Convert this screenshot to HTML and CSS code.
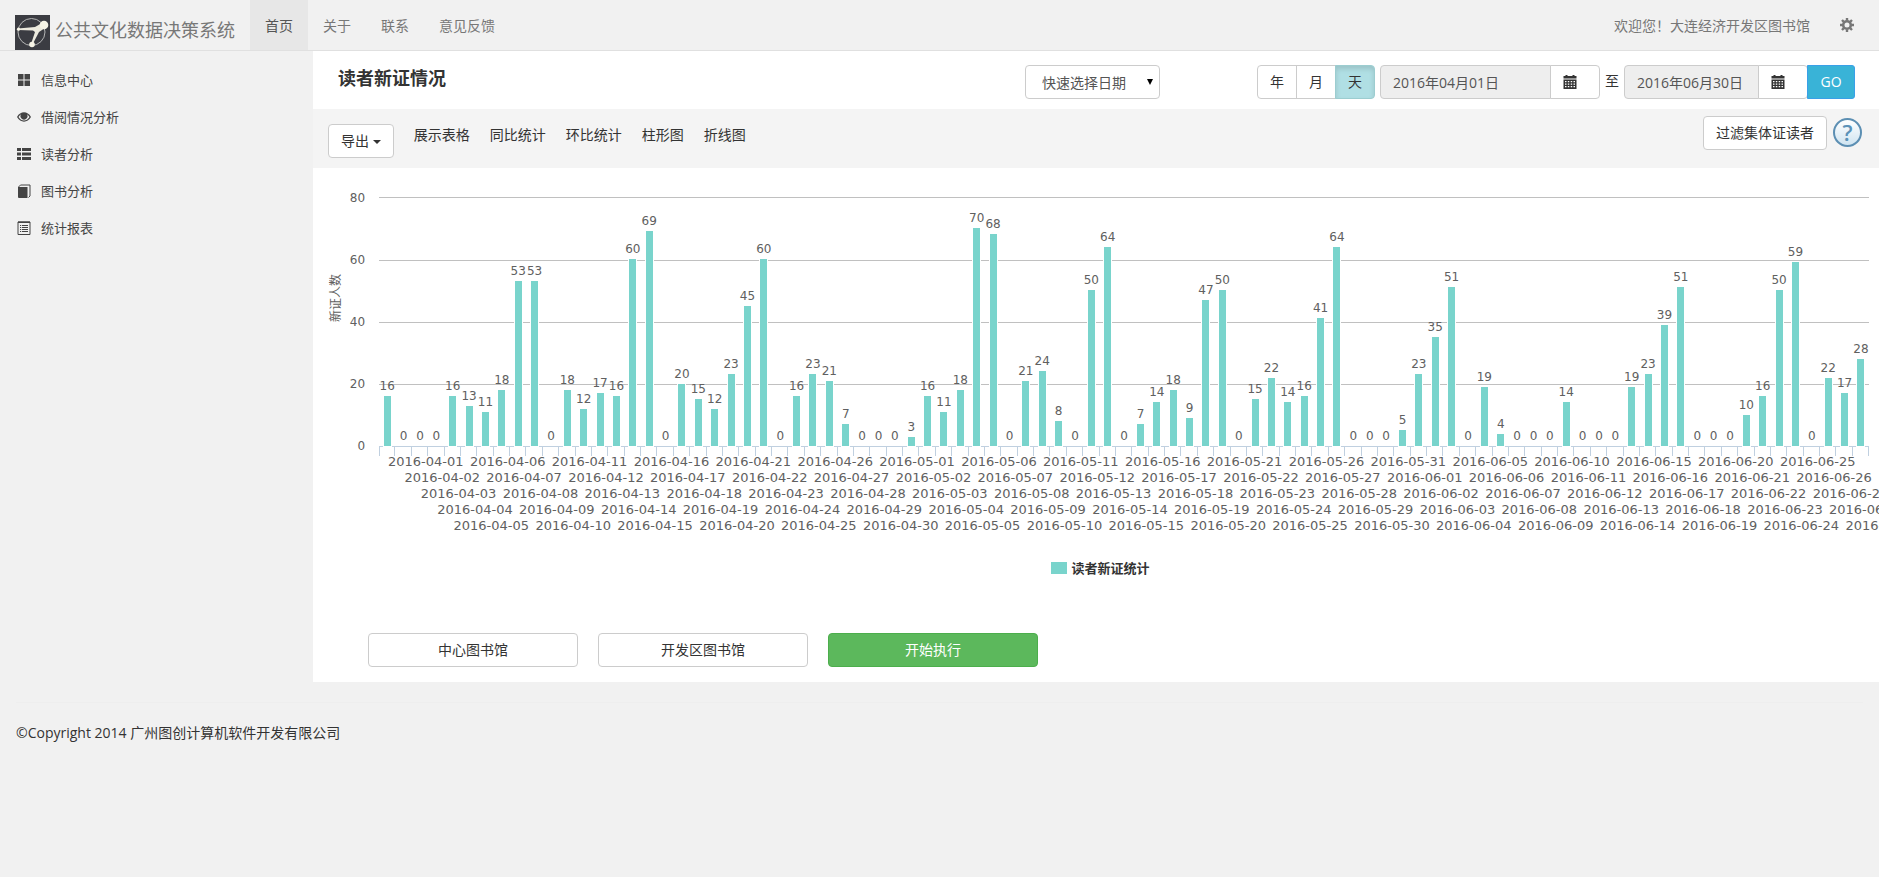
FILE: index.html
```html
<!DOCTYPE html>
<html lang="zh-CN">
<head>
    <meta charset="UTF-8">
    <meta name="viewport" content="width=device-width, initial-scale=1.0">
    <title>公共文化数据决策系统</title>
    <link rel="stylesheet" href="styles.css">
</head>
<body>
    <header class="navbar">
        <a href="#" class="brand">
            <svg class="logo" viewBox="0 0 35 35">
                <rect width="35" height="35" fill="#3b3c42"/>
                <circle cx="16.500" cy="17" r="13.500" fill="none" stroke="#b4b5b5" stroke-width="1"/>
                <path d="M3 13.500L20 12L27 8L30 13L24 17L17.500 29.500L16 29L20 17L18 15.500L3 15Z" fill="#eceade"/>
                <circle cx="29" cy="10" r="4.300" fill="#f6f4e6"/>
                <circle cx="17" cy="29.500" r="2.800" fill="#f6f4e6"/>
                <circle cx="3.500" cy="14.200" r="1.600" fill="#f6f4e6"/>
            </svg>
            <span>公共文化数据决策系统</span>
        </a>
        <nav class="menu">
            <a href="#" class="active">首页</a>
            <a href="#">关于</a>
            <a href="#">联系</a>
            <a href="#">意见反馈</a>
        </nav>
        <div class="user">
            <a href="#">欢迎您！大连经济开发区图书馆</a>
            <a href="#" aria-label="设置">
                <svg class="icon" viewBox="0 0 14 14" fill="none" stroke="currentColor">
                    <circle cx="7" cy="7" r="3.800" stroke-width="2.600"/>
                    <path d="M7 0V2.500M7 11.500V14M0 7H2.500M11.500 7H14M2 2L3.800 3.800M10.200 10.200L12 12M12 2L10.200 3.800M3.800 10.200L2 12" stroke-width="2.400"/>
                </svg>
            </a>
        </div>
    </header>

    <div class="container">
        <aside class="sidebar">
            <a href="#">
                <svg class="icon" viewBox="0 0 14 14"><path d="M1 1h5.500v5.500h-5.500zM7.500 1h5.500v5.500h-5.500zM1 7.500h5.500v5.500h-5.500zM7.500 7.500h5.500v5.500h-5.500z"/></svg>
                信息中心
            </a>
            <a href="#">
                <svg class="icon" viewBox="0 0 14 14"><path fill-rule="evenodd" d="M0 7C3.500 0.800 10.500 0.800 14 7C10.500 13.200 3.500 13.200 0 7ZM1.500 7C4.500 11.800 9.500 11.800 12.500 7C11.800 5.800 11 4.900 10 4.300A3.500 3.500 0 1 1 4 4.300C3 4.900 2.200 5.800 1.500 7Z"/><circle cx="7.500" cy="6" r="2"/></svg>
                借阅情况分析
            </a>
            <a href="#">
                <svg class="icon" viewBox="0 0 14 14"><path d="M0 1h4v3h-4zM5 1h9v3h-9zM0 5.500h4v3h-4zM5 5.500h9v3h-9zM0 10h4v3h-4zM5 10h9v3h-9z"/></svg>
                读者分析
            </a>
            <a href="#">
                <svg class="icon" viewBox="0 0 14 14"><path d="M1 3h9.500v11h-8.500q-1 0-1-1z"/><path d="M1.500 3L3.500 1H13V12L11.500 13.500" fill="none" stroke="currentColor"/></svg>
                图书分析
            </a>
            <a href="#">
                <svg class="icon" viewBox="0 0 14 14"><path d="M1 1h12v12.500h-12z" fill="none" stroke="currentColor"/><path d="M1 0.500h12v1.500h-12zM3 4h1.200v1h-1.200zM5 4h6v1h-6zM3 6h1.200v1h-1.200zM5 6h6v1h-6zM3 8h1.200v1h-1.200zM5 8h6v1h-6zM3 10h1.200v1h-1.200zM5 10h6v1h-6z"/></svg>
                统计报表
            </a>
        </aside>

        <main class="content">
            <div class="title-bar">
                <h1>读者新证情况</h1>
                <form class="filters" onsubmit="return false">
                    <div class="select-wrap">
                        <select class="quick" aria-label="快速选择日期">
                            <option>快速选择日期</option>
                        </select>
                    </div>
                    <div class="btn-group">
                        <button type="button">年</button>
                        <button type="button">月</button>
                        <button type="button" class="active">天</button>
                    </div>
                    <div class="input-group from">
                        <input type="text" value="2016年04月01日" aria-label="开始日期" readonly>
                        <button type="button" aria-label="选择开始日期">
                            <svg class="icon" viewBox="0 0 14 14"><path fill-rule="evenodd" d="M0.500 1h2v-1h2v1h5v-1h2v1h2v2.500h-13zM0.500 4.500h13v9.500h-13zM2 6v1.200h1.500v-1.200zM4.800 6v1.200h1.500v-1.200zM7.700 6v1.200h1.500v-1.200zM10.500 6v1.200h1.500v-1.200zM2 8.500v1.200h1.500v-1.200zM4.800 8.500v1.200h1.500v-1.200zM7.700 8.500v1.200h1.500v-1.200zM10.500 8.500v1.200h1.500v-1.200zM2 11v1.200h1.500v-1.200zM4.800 11v1.200h1.500v-1.200zM7.700 11v1.200h1.500v-1.200zM10.500 11v1.200h1.500v-1.200z"/></svg>
                        </button>
                    </div>
                    <span class="to">至</span>
                    <div class="input-group until">
                        <input type="text" value="2016年06月30日" aria-label="结束日期" readonly>
                        <button type="button" aria-label="选择结束日期">
                            <svg class="icon" viewBox="0 0 14 14"><path fill-rule="evenodd" d="M0.500 1h2v-1h2v1h5v-1h2v1h2v2.500h-13zM0.500 4.500h13v9.500h-13zM2 6v1.200h1.500v-1.200zM4.800 6v1.200h1.500v-1.200zM7.700 6v1.200h1.500v-1.200zM10.500 6v1.200h1.500v-1.200zM2 8.500v1.200h1.500v-1.200zM4.800 8.500v1.200h1.500v-1.200zM7.700 8.500v1.200h1.500v-1.200zM10.500 8.500v1.200h1.500v-1.200zM2 11v1.200h1.500v-1.200zM4.800 11v1.200h1.500v-1.200zM7.700 11v1.200h1.500v-1.200zM10.500 11v1.200h1.500v-1.200z"/></svg>
                        </button>
                        <button type="submit" class="go">GO</button>
                    </div>
                </form>
            </div>

            <div class="toolbar">
                <button type="button" class="btn export">导出 <span class="caret"></span></button>
                <nav class="views">
                    <a href="#">展示表格</a>
                    <a href="#">同比统计</a>
                    <a href="#">环比统计</a>
                    <a href="#">柱形图</a>
                    <a href="#">折线图</a>
                </nav>
                <div class="tools">
                    <button type="button" class="btn">过滤集体证读者</button>
                    <a href="#" class="help" aria-label="帮助">?</a>
                </div>
            </div>

            <section class="chart">
                <div class="y-title">新证人数</div>
                <div class="y-axis"><span>80</span><span>60</span><span>40</span><span>20</span><span>0</span></div>
                <div class="plot-area">
                    <div class="plot" id="plot"></div>
                    <div class="days" id="days"></div>
                </div>
            </section>
            <div class="legend"><span class="swatch"></span>读者新证统计</div>

            <div class="actions">
                <button type="button" class="btn">中心图书馆</button>
                <button type="button" class="btn">开发区图书馆</button>
                <button type="button" class="btn success">开始执行</button>
            </div>
        </main>
    </div>

    <footer class="footer">©Copyright 2014 广州图创计算机软件开发有限公司</footer>

    <script src="chart.js"></script>
</body>
</html>
```
FILE: styles.css
```css
*, *:before, *:after {
    box-sizing: border-box;
}
body {
    margin: 0;
    background: #f1f1f1;
    color: #333;
    font-family: "Open Sans", "Noto Sans CJK SC", sans-serif;
    font-size: 14px;
    line-height: 20px;
    overflow-x: hidden;
}
a {
    color: inherit;
    text-decoration: none;
}
button, input, select {
    font: inherit;
    color: #333;
    margin: 0;
}
button {
    cursor: pointer;
}
.icon {
    width: 14px;
    height: 14px;
    fill: currentColor;
    flex: none;
}
svg.icon[fill="none"] {
    fill: none;
}

/* top bar */
.navbar {
    display: flex;
    height: 51px;
    border-bottom: 1px solid #e0e0e0;
    color: #777;
}
.brand {
    display: flex;
    gap: 5px;
    padding: 15px 15px 0;
    font-size: 18px;
    line-height: 30px;
}
.logo {
    width: 35px;
    height: 35px;
}
.menu {
    display: flex;
}
.menu a, .user a {
    padding: 16px 15px 14px;
}
.menu .active {
    background: #e7e7e7;
    color: #555;
}
.user {
    display: flex;
    margin-left: auto;
    padding-right: 10px;
}
.user .icon {
    margin-top: 2px;
}

/* layout */
.container {
    display: flex;
}
.sidebar {
    width: 16.66%;
    flex: none;
    padding-top: 10px;
    font-size: 13px;
    color: #444;
}
.sidebar a {
    display: flex;
    align-items: center;
    gap: 10px;
    height: 37px;
    padding-left: 17px;
}
.content {
    flex: 1;
    min-width: 0;
    background: #fff;
}

/* title and date filters */
.title-bar {
    display: flex;
    justify-content: space-between;
    align-items: flex-start;
    height: 58px;
    padding: 14px 24px 0 25px;
}
h1 {
    margin: 0;
    font-size: 18px;
    font-weight: 700;
    line-height: 26px;
}
.filters {
    display: flex;
}
.select-wrap {
    position: relative;
    width: 135px;
    margin-right: 97px;
}
.select-wrap:after {
    content: "";
    position: absolute;
    right: 7px;
    top: 14px;
    border: 3px solid transparent;
    border-top: 6px solid #000;
    border-bottom: 0;
    pointer-events: none;
}
.quick {
    appearance: none;
    width: 100%;
    height: 34px;
    padding: 2px 16px 0;
    color: #555;
    background: #fff;
    border: 1px solid #ccc;
    border-radius: 4px;
}
.btn-group, .input-group {
    display: flex;
}
.btn-group {
    margin-right: 5px;
}
.btn-group button {
    width: 40px;
    height: 34px;
    padding: 0;
    background: #fff;
    border: 1px solid #ccc;
}
.btn-group button + button {
    margin-left: -1px;
}
.btn-group button:first-child {
    border-radius: 4px 0 0 4px;
}
.btn-group button:last-child {
    border-radius: 0 4px 4px 0;
}
.btn-group .active {
    background: #b0dfe4;
    border-color: #9ccdd0;
    box-shadow: inset 0 3px 5px rgba(0, 0, 0, 0.125);
}
.input-group input {
    width: 171px;
    height: 34px;
    padding: 0 12px;
    color: #555;
    background: #eee;
    border: 1px solid #ccc;
    border-radius: 4px 0 0 4px;
    outline: none;
}
.until input {
    width: 135px;
}
.input-group button {
    width: 50px;
    height: 34px;
    margin-left: -1px;
    padding: 4px 0 0 12px;
    text-align: left;
    background: #fff;
    border: 1px solid #ccc;
    border-radius: 0 4px 4px 0;
}
.input-group .go {
    width: 48px;
    padding: 0;
    text-align: center;
    color: #fff;
    background: #39b3d7;
    border-color: #39a0e8;
    border-radius: 0 3px 3px 0;
}
.to {
    padding: 6px 5px 0;
}

/* toolbar */
.toolbar {
    display: flex;
    align-items: flex-start;
    height: 59px;
    padding: 7px 17px 0 15px;
    background: #f4f4f4;
}
.btn {
    height: 34px;
    padding: 0 12px;
    background: #fff;
    border: 1px solid #ccc;
    border-radius: 4px;
}
.export {
    margin-top: 8px;
}
.caret {
    display: inline-block;
    vertical-align: middle;
    border: 4px solid transparent;
    border-top-color: #333;
    border-bottom: 0;
}
.views {
    display: flex;
    gap: 20px;
    padding: 9px 20px;
}
.tools {
    display: flex;
    gap: 6px;
    margin-left: auto;
}
.help {
    width: 29px;
    height: 29px;
    margin-top: 2px;
    border: 2px solid #5c8fb3;
    border-radius: 50%;
    background: linear-gradient(#fff, #cfe4f1);
    color: #5b92b8;
    font-size: 22px;
    font-weight: 600;
    line-height: 25px;
    text-align: center;
}

/* bar chart */
.chart {
    display: flex;
    padding: 29px 10px 0 13px;
    font-family: "DejaVu Sans", "Noto Sans CJK SC", sans-serif;
    font-size: 12px;
    color: #606060;
}
.y-title {
    height: 201px;
    width: 20px;
    writing-mode: vertical-rl;
    text-orientation: sideways;
    transform: rotate(180deg);
    text-align: center;
}
.y-axis {
    display: flex;
    flex-direction: column;
    justify-content: space-between;
    align-items: flex-end;
    width: 19px;
    height: 268px;
    margin: -9px 14px 0 0;
}
.plot-area {
    flex: 1;
    min-width: 0;
}
.plot {
    display: flex;
    height: 250px;
    border-bottom: 1px solid #c0d0e0;
    background: linear-gradient(
        #c0c0c0 0 1px, transparent 1px 63px,
        #c0c0c0 63px 64px, transparent 64px 125px,
        #c0c0c0 125px 126px, transparent 126px 187px,
        #c0c0c0 187px 188px, transparent 188px
    );
}
.col {
    flex: 1;
    min-width: 0;
    display: flex;
    flex-direction: column;
    justify-content: flex-end;
    align-items: center;
}
.value {
    line-height: 12px;
    margin-bottom: 4px;
}
.bar {
    width: 7px;
    flex: none;
    background: #79d4cc;
    box-shadow: 0 0 0 1px #fff;
}
.days {
    display: flex;
    height: 90px;
    font-size: 13px;
    line-height: 16px;
}
.day {
    flex: 1;
    min-width: 0;
    padding-left: 9px;
    white-space: nowrap;
}
.day:before {
    content: "";
    display: block;
    height: 9px;
    margin: 0 0 -2px -9px;
    border-right: 1px solid #c0d0e0;
}
.day:first-child:before {
    border-left: 1px solid #c0d0e0;
}
.day span {
    display: block;
}
.row2 span { padding-top: 16px; }
.row3 span { padding-top: 32px; }
.row4 span { padding-top: 48px; }
.row5 span { padding-top: 64px; }

.legend {
    display: flex;
    justify-content: center;
    align-items: center;
    gap: 5px;
    padding: 21px 0 0 8px;
    color: #333;
    font-size: 13px;
    font-weight: 700;
}
.swatch {
    width: 16px;
    height: 12px;
    background: #79d4cc;
}
.actions {
    display: flex;
    gap: 20px;
    padding: 55px 55px 15px;
}
.actions .btn {
    width: 210px;
}
.actions .success {
    color: #fff;
    background: #5cb85c;
    border-color: #4cae4c;
}
.footer {
    margin: 20px 16px 0;
    padding: 20px 0;
    border-top: 1px solid #eee;
}
```
FILE: chart.js
```js
var values = [
    16, 0, 0, 0, 16, 13, 11, 18, 53, 53, 0, 18, 12, 17, 16, 60, 69, 0, 20, 15, 12, 23, 45, 60, 0, 16, 23, 21, 7, 0,
    0, 0, 3, 16, 11, 18, 70, 68, 0, 21, 24, 8, 0, 50, 64, 0, 7, 14, 18, 9, 47, 50, 0, 15, 22, 14, 16, 41, 64, 0, 0,
    0, 5, 23, 35, 51, 0, 19, 4, 0, 0, 0, 14, 0, 0, 0, 19, 23, 39, 51, 0, 0, 0, 10, 16, 50, 59, 0, 22, 17, 28
];
var max = 80;
var rows = 5;
var plot = document.getElementById("plot");
var days = document.getElementById("days");

for (var i = 0; i < values.length; i++) {
    var col = document.createElement("div");
    col.className = "col";
    col.innerHTML = '<span class="value">' + values[i] + '</span>';
    if (values[i] > 0) {
        col.innerHTML += '<div class="bar" style="height: ' + (values[i] / max * 100) + '%"></div>';
    }
    plot.appendChild(col);

    // dates are staggered over five rows, the last one has no room left
    var date = new Date(Date.UTC(2016, 3, 1 + i)).toISOString().slice(0, 10);
    var day = document.createElement("div");
    day.className = "day row" + (i % rows + 1);
    if (i < values.length - 1) {
        day.innerHTML = "<span>" + date + "</span>";
    }
    days.appendChild(day);
}
```
